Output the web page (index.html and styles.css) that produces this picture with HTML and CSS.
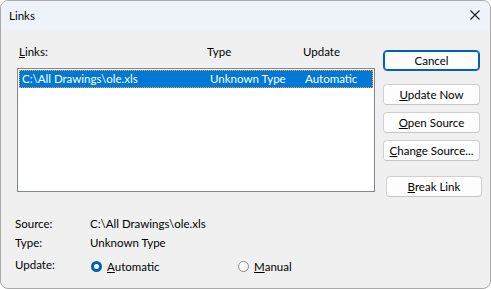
FILE: index.html
```html
<!DOCTYPE html>
<html lang="en">
<head>
    <meta charset="UTF-8">
    <title>Links</title>
    <link rel="stylesheet" href="styles.css">
</head>
<body>
    <div class="window">
        <div class="titlebar">
            <span class="title">Links</span>
            <svg class="close" width="10" height="10" viewBox="0 0 10 10">
                <path d="M0.5 0.5 L9.5 9.5 M9.5 0.5 L0.5 9.5" stroke="#1a1a1a" stroke-width="1.1" fill="none"/>
            </svg>
        </div>

        <div class="content">
            <div class="main">
                <div class="list-area">
                    <div class="list-head">
                        <span class="col-src"><u>L</u>inks:</span>
                        <span class="col-type">Type</span>
                        <span class="col-upd">Update</span>
                    </div>
                    <div class="listbox">
                        <div class="row selected">
                            <span class="col-src">C:\All Drawings\ole.xls</span>
                            <span class="col-type">Unknown Type</span>
                            <span class="col-upd">Automatic</span>
                        </div>
                    </div>
                </div>

                <div class="buttons">
                    <button class="btn default">Cancel</button>
                    <button class="btn"><u>U</u>pdate Now</button>
                    <button class="btn"><u>O</u>pen Source</button>
                    <button class="btn change"><u>C</u>hange Source...</button>
                    <button class="btn break"><u>B</u>reak Link</button>
                </div>
            </div>

            <div class="info">
                <span class="label">Source:</span>
                <span class="value">C:\All Drawings\ole.xls</span>
                <span class="label">Type:</span>
                <span class="value">Unknown Type</span>
                <span class="label update">Update:</span>
                <div class="radios">
                    <label class="radio auto"><span class="dot checked"></span><u>A</u>utomatic</label>
                    <label class="radio"><span class="dot"></span><u>M</u>anual</label>
                </div>
            </div>
        </div>
    </div>
</body>
</html>
```

FILE: styles.css
```css
html, body { margin: 0; padding: 0; background: #ffffff; }

body {
    font-family: Lato, "Noto Sans", sans-serif;
    font-size: 11.5px;
    color: #000;
}

.window {
    width: 491px;
    height: 289px;
    box-sizing: border-box;
    border: 1px solid #a9a9a9;
    border-radius: 8px;
    background: #f0f0f0;
    overflow: hidden;
}

.titlebar {
    height: 30px;
    background: #eef3fa;
    display: flex;
    align-items: center;
    justify-content: space-between;
    padding: 0 10px 0 8px;
}
.title { margin-top: -1px; }
.close { display: block; margin-top: -2px; }

.content { padding: 12px 0 0 16px; }

.main { display: flex; }

.list-area { width: 358px; }

.list-head {
    display: flex;
    height: 25px;
    padding-left: 2px;
    line-height: 17px;
}
.list-head .col-src { width: 188px; }
.list-head .col-type { width: 96px; }

.listbox {
    height: 124px;
    box-sizing: border-box;
    border: 1px solid #828790;
    background: #fff;
    padding: 1px;
}

.row {
    display: flex;
    height: 18px;
    line-height: 17px;
    box-sizing: border-box;
    padding-left: 3px;
}
.row.selected {
    background: #0078d7;
    color: #fff;
    outline: 1px dotted #f5a623;
    outline-offset: -1px;
}
.row .col-src { width: 188px; }
.row .col-type { width: 95px; }

.buttons {
    display: flex;
    flex-direction: column;
    align-items: flex-start;
    margin-left: 8px;
    padding-top: 7px;
}

.btn {
    width: 97px;
    height: 21px;
    box-sizing: border-box;
    font-family: inherit;
    font-size: 11.5px;
    line-height: 16px;
    padding: 0;
    background: #fdfdfd;
    border: 1px solid #d0d0d0;
    border-bottom-color: #c4c4c4;
    border-radius: 4px;
    color: #000;
    margin-bottom: 7px;
}
.btn.default {
    border: 1px solid #005fb8;
    box-shadow: inset 0 0 0 1px #005fb8;
    margin-bottom: 13px;
}
.btn.change { margin-bottom: 15px; }
.btn.break { margin: 0 0 0 3px; width: 96px; }

.info {
    display: grid;
    grid-template-columns: 75px auto;
    grid-template-rows: 19px 19px 23px;
    margin-top: 18px;
    margin-left: -2px;
    line-height: 17px;
}
.info .update { padding-top: 3px; }

.radios {
    display: flex;
    align-items: center;
    height: 23px;
    padding-top: 3px;
    box-sizing: border-box;
}
.radio { display: flex; align-items: center; }
.radio.auto { width: 147px; }

.dot {
    width: 11px;
    height: 11px;
    box-sizing: border-box;
    border-radius: 50%;
    border: 1px solid #8a8a8a;
    background: #fff;
    margin-right: 5px;
    margin-left: 1px;
}
.dot.checked {
    border: 3px solid #005fb8;
    background: #fff;
}
```
